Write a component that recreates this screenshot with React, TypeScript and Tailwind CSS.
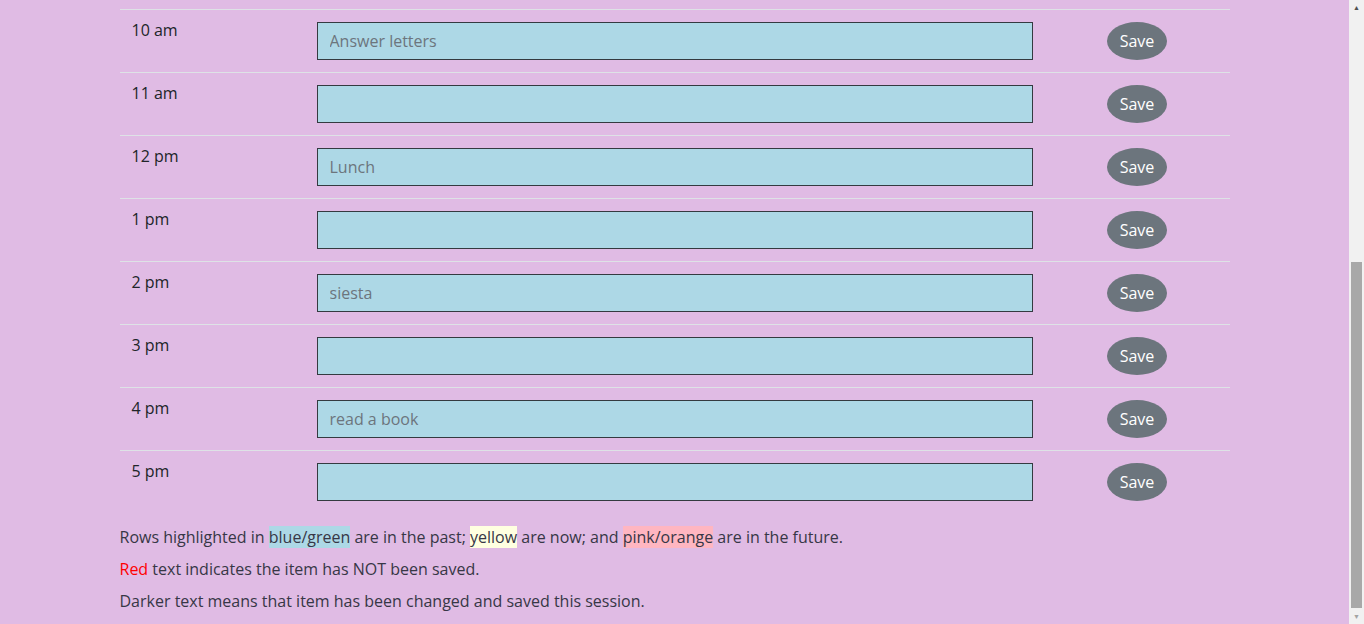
const hours = [
  { label: '10 am', text: 'Answer letters' },
  { label: '11 am', text: '' },
  { label: '12 pm', text: 'Lunch' },
  { label: '1 pm', text: '' },
  { label: '2 pm', text: 'siesta' },
  { label: '3 pm', text: '' },
  { label: '4 pm', text: 'read a book' },
  { label: '5 pm', text: '' },
];

function HourRow({ label, text }: { label: string; text: string }) {
  return (
    <div className="flex border-t border-[#dee2e6]">
      <div className="w-[185px] px-3 pt-2 font-medium text-[#212529] leading-6">{label}</div>
      <div className="w-[740px] px-3 py-3">
        <input
          defaultValue={text}
          className="block h-[38px] w-full border border-[#343a40] bg-[#add8e6] px-3 text-base text-[#6c757d] outline-none"
        />
      </div>
      <div className="flex w-[185px] justify-center py-3">
        <button className="h-[38px] w-[60px] rounded-[50%] bg-[#6c757d] text-base text-white">Save</button>
      </div>
    </div>
  );
}

function Scrollbar() {
  return (
    <div className="flex w-[15px] shrink-0 flex-col bg-[#f1f1f1]">
      <div className="flex h-[15px] items-center justify-center text-[7px] leading-none text-[#505050]">▲</div>
      <div className="h-[247px]" />
      <div className="ml-[2px] mr-[2px] h-[346px] bg-[#a8a8a8]" />
      <div className="flex-1" />
      <div className="flex h-[15px] items-center justify-center text-[7px] leading-none text-[#a3a3a3]">▼</div>
    </div>
  );
}

export default function App() {
  return (
    <div className="flex h-screen overflow-hidden bg-[#e0bbe4] font-['Open_Sans',sans-serif] text-[#212529]">
      <main className="min-w-0 flex-1 pt-[9px]">
        <div className="mx-auto w-[1110px]">
          {hours.map((h) => (
            <HourRow key={h.label} label={h.label} text={h.text} />
          ))}

          <div className="pt-3 text-base leading-6 text-[#373746]">
            <p className="mb-2">
              Rows highlighted in <span className="bg-[#add8e6]">blue/green</span> are in the past;{' '}
              <span className="bg-[#ffffe0]">yellow</span> are now; and{' '}
              <span className="bg-[#ffb6c1]">pink/orange</span> are in the future.
            </p>
            <p className="mb-2">
              <span className="text-[#ff0000]">Red</span> text indicates the item has NOT been saved.
            </p>
            <p>Darker text means that item has been changed and saved this session.</p>
          </div>
        </div>
      </main>
      <Scrollbar />
    </div>
  );
}
